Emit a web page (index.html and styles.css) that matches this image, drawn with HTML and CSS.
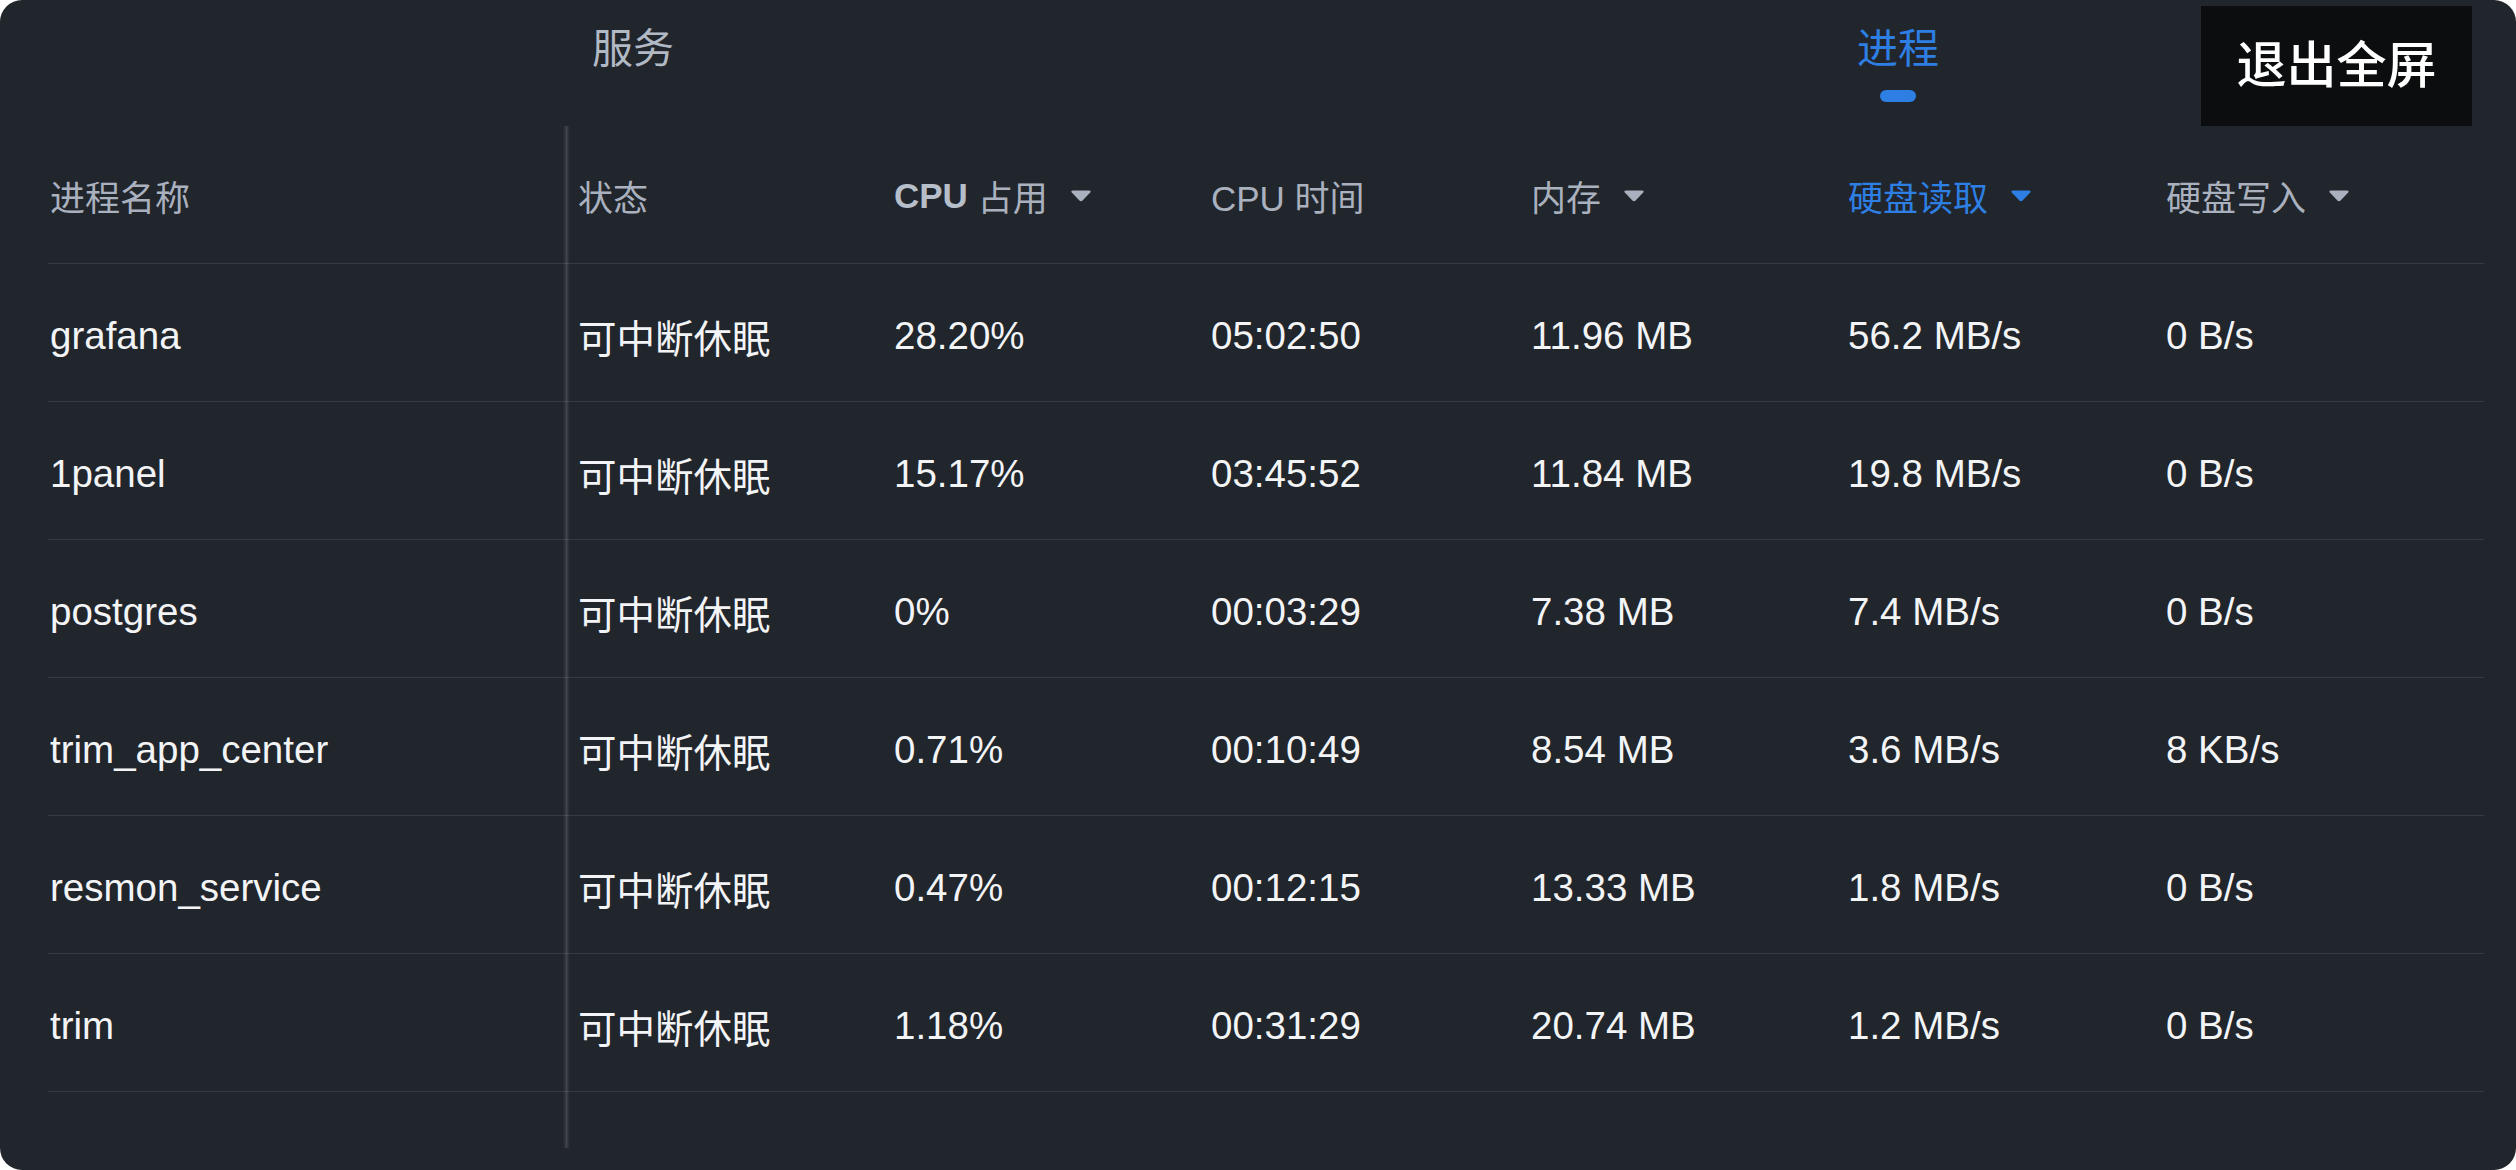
FILE: index.html
```html
<!DOCTYPE html>
<html lang="zh-CN">
<head>
<meta charset="utf-8">
<title>进程</title>
<link rel="stylesheet" href="styles.css">
</head>
<body>
<div class="panel">
  <div class="tabs">
    <div class="tab">服务</div>
    <div class="tab active">进程<span class="ind"></span></div>
  </div>
  <button class="exit">退出全屏</button>
  <div class="table">
    <div class="divider"></div>
    <div class="row head">
      <div class="cell c1">进程名称</div>
      <div class="cell c2">状态</div>
      <div class="cell"><b class="bold">CPU</b>&nbsp;占用<svg class="tri" viewBox="0 0 22 13"><path d="M3 1.5 H19 Q21.5 1.5 20.2 3.6 L12.6 11.6 Q11 13 9.4 11.6 L1.8 3.6 Q0.5 1.5 3 1.5Z"/></svg></div>
      <div class="cell">CPU 时间</div>
      <div class="cell">内存<svg class="tri" viewBox="0 0 22 13"><path d="M3 1.5 H19 Q21.5 1.5 20.2 3.6 L12.6 11.6 Q11 13 9.4 11.6 L1.8 3.6 Q0.5 1.5 3 1.5Z"/></svg></div>
      <div class="cell sorted">硬盘读取<svg class="tri" viewBox="0 0 22 13"><path d="M3 1.5 H19 Q21.5 1.5 20.2 3.6 L12.6 11.6 Q11 13 9.4 11.6 L1.8 3.6 Q0.5 1.5 3 1.5Z"/></svg></div>
      <div class="cell">硬盘写入<svg class="tri" viewBox="0 0 22 13"><path d="M3 1.5 H19 Q21.5 1.5 20.2 3.6 L12.6 11.6 Q11 13 9.4 11.6 L1.8 3.6 Q0.5 1.5 3 1.5Z"/></svg></div>
    </div>
    <div class="tbody">
      <div class="row">
        <div class="cell c1">grafana</div><div class="cell c2">可中断休眠</div><div class="cell">28.20%</div><div class="cell">05:02:50</div><div class="cell">11.96 MB</div><div class="cell">56.2 MB/s</div><div class="cell">0 B/s</div>
      </div>
      <div class="row">
        <div class="cell c1">1panel</div><div class="cell c2">可中断休眠</div><div class="cell">15.17%</div><div class="cell">03:45:52</div><div class="cell">11.84 MB</div><div class="cell">19.8 MB/s</div><div class="cell">0 B/s</div>
      </div>
      <div class="row">
        <div class="cell c1">postgres</div><div class="cell c2">可中断休眠</div><div class="cell">0%</div><div class="cell">00:03:29</div><div class="cell">7.38 MB</div><div class="cell">7.4 MB/s</div><div class="cell">0 B/s</div>
      </div>
      <div class="row">
        <div class="cell c1">trim_app_center</div><div class="cell c2">可中断休眠</div><div class="cell">0.71%</div><div class="cell">00:10:49</div><div class="cell">8.54 MB</div><div class="cell">3.6 MB/s</div><div class="cell">8 KB/s</div>
      </div>
      <div class="row">
        <div class="cell c1">resmon_service</div><div class="cell c2">可中断休眠</div><div class="cell">0.47%</div><div class="cell">00:12:15</div><div class="cell">13.33 MB</div><div class="cell">1.8 MB/s</div><div class="cell">0 B/s</div>
      </div>
      <div class="row">
        <div class="cell c1">trim</div><div class="cell c2">可中断休眠</div><div class="cell">1.18%</div><div class="cell">00:31:29</div><div class="cell">20.74 MB</div><div class="cell">1.2 MB/s</div><div class="cell">0 B/s</div>
      </div>
      <div class="row">
        <div class="cell c1">nginx</div><div class="cell c2">可中断休眠</div><div class="cell">0.12%</div><div class="cell">00:01:05</div><div class="cell">5.62 MB</div><div class="cell">0.6 MB/s</div><div class="cell">0 B/s</div>
      </div>
    </div>
  </div>
</div>
</body>
</html>
```
FILE: styles.css
```css
* { box-sizing: border-box; }
html, body {
  margin: 0;
  padding: 0;
  background: #ffffff;
}
body {
  font-family: "Liberation Sans", "Noto Sans CJK SC", sans-serif;
}
.panel {
  position: relative;
  width: 2516px;
  height: 1170px;
  background: #21252c;
  border-radius: 22px;
  overflow: hidden;
}
.tabs {
  display: grid;
  grid-template-columns: 1266px 1264px;
  height: 128px;
}
.tab {
  display: flex;
  flex-direction: column;
  align-items: center;
  padding-top: 19px;
  font-size: 41px;
  line-height: 60px;
  color: #b1b9c5;
}
.tab.active {
  color: #2e7fe4;
}
.ind {
  display: block;
  width: 36px;
  height: 12px;
  margin-top: 11px;
  border-radius: 6px;
  background: #2e7fe4;
}
.exit {
  position: absolute;
  left: 2201px;
  top: 6px;
  width: 271px;
  height: 120px;
  border: none;
  border-radius: 0;
  padding: 0;
  background: #0b0d0f;
  color: #ffffff;
  font-family: "Liberation Sans", "Noto Sans CJK SC", sans-serif;
  font-size: 50px;
  font-weight: 500;
  line-height: 120px;
  text-align: center;
}
.table {
  position: relative;
  margin-left: 48px;
  width: 2436px;
}
.divider {
  position: absolute;
  left: 515px;
  top: -2px;
  height: 1022px;
  width: 7px;
  background: linear-gradient(to right, rgba(255,255,255,0.0), rgba(255,255,255,0.07) 30%, rgba(255,255,255,0.15) 50%, rgba(255,255,255,0.07) 70%, rgba(255,255,255,0.0));
  z-index: 2;
}
.row {
  display: grid;
  grid-template-columns: 518px 328px 317px 320px 317px 318px 318px;
  align-items: center;
  height: 138px;
  border-bottom: 1px solid #363b44;
  font-size: 38.5px;
  color: #f3f4f6;
}
.row .cell {
  padding-top: 6px;
}
.row.head {
  height: 136px;
  font-size: 35px;
  color: #a9b1be;
}
.row.head .cell {
  padding-top: 0;
}
.tbody {
  height: 884px;
  overflow: hidden;
}
.cell {
  display: flex;
  align-items: center;
  white-space: nowrap;
}
.c1 { padding-left: 2px; }
.c2 { padding-left: 12px; }
.bold {
  font-weight: 700;
  color: #b6bec9;
}
.tri {
  width: 22px;
  height: 13px;
  margin-left: 22px;
  fill: #a9b1be;
}
.sorted { color: #2e7fe4; }
.sorted .tri { fill: #2e7fe4; }
```
